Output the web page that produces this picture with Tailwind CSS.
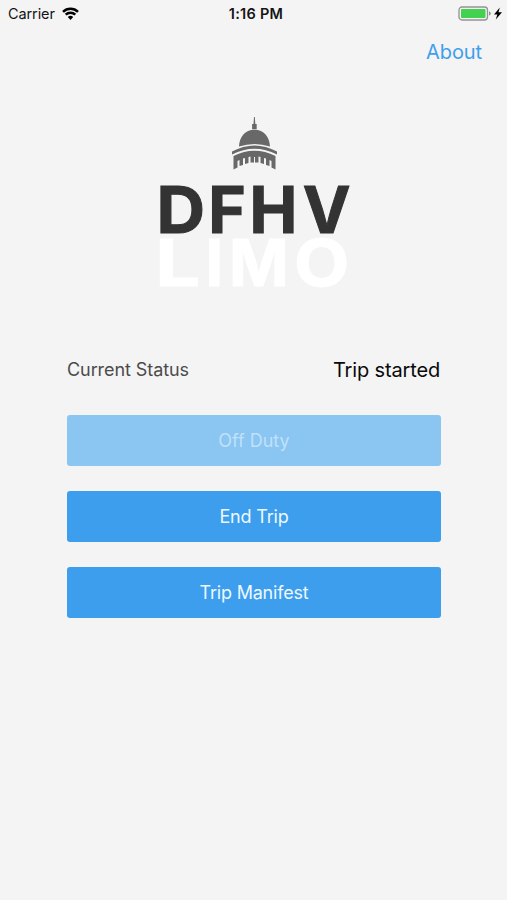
<!DOCTYPE html>
<html lang="en">
<head>
<meta charset="utf-8">
<title>DFHV Limo</title>
<script src="https://cdn.jsdelivr.net/npm/@tailwindcss/browser@4"></script>
</head>
<body class="bg-[#f4f4f4] font-['Inter','Liberation_Sans',sans-serif]">
<div class="flex h-[900px] w-[507px] flex-col overflow-hidden">
  <header class="grid h-7 grid-cols-3 items-center pl-2 pr-[5px] text-[14.5px] leading-7 text-[#151515]">
    <div class="flex items-center gap-[7px]">
      <span class="tracking-[-0.1px]">Carrier</span>
      <svg class="-mt-[2px] h-[13px] w-[17px]" viewBox="0 0 17 13" fill="none" stroke="#000" stroke-width="2.5">
        <path d="M1 4.900a10.600 10.600 0 0 1 15 0"/>
        <path d="M3.700 7.700a6.800 6.800 0 0 1 9.600 0"/>
        <path d="M8.500 13 5.800 10.100a3.900 3.900 0 0 1 5.400 0z" fill="#000" stroke="none"/>
      </svg>
    </div>
    <div class="pl-[2px] text-center font-semibold tracking-[0.25px]">1:16 PM</div>
    <div class="flex items-center justify-end gap-[3px]">
      <svg class="-mt-[2px] h-[15px] w-[33px]" viewBox="0 0 33 15">
        <rect x="1" y="1" width="28.5" height="13" rx="3" fill="#f4f4f4" stroke="#929292" stroke-width="1.3"/>
        <rect x="3" y="3" width="24.5" height="9" rx="1" fill="#42d250"/>
        <path d="M31 5.200q1.800.7 1.800 2.300T31 9.800z" fill="#929292"/>
      </svg>
      <svg class="-mt-[2px] h-[13px] w-[8px]" viewBox="0 0 8 13"><path d="M5.800.5 0 7.500h3.300L1.800 12.500 8 5.300H4.500z" fill="#000"/></svg>
    </div>
  </header>
  <nav class="flex h-12 items-center justify-end pr-[25px]">
    <a class="text-[20px] tracking-[-0.1px] text-[#3e9fec]">About</a>
  </nav>
  <div class="mt-10 flex justify-center">
    <svg class="h-[180px] w-[200px] overflow-visible" viewBox="154 116 200 180" role="img" aria-label="DFHV Limo">
      <g fill="#686868">
        <path d="M254 117h.8l.5 7h1.400v5.200h-4.600V124h1.400z"/>
        <path d="M239 146.500C239.500 137 245 129.800 254.500 129.800S269.500 137 270 146.500Q254.500 141.500 239 146.500z"/>
        <path d="M232 154.500V151.500Q254.500 139.500 277 151.500V154.500Q254.500 143 232 154.500z"/>
        <path d="M233.500 156Q254.500 145.500 275.500 156V169.500L271.500 167.500V161L269.500 160V166L266 165V158.500L264 158V164L260.500 163V157L258.500 156.500V162.500H250.500V156.500L248.500 157V163L245 164V158L243 158.500V165L239.500 166V160L237.500 161V167.500L233.500 169.500z"/>
        <path d="M254 157h1v6h-1z" fill="#f4f4f4"/>
      </g>
      <g font-family="Inter" font-weight="700" font-size="64" fill="#333" stroke="#333" stroke-width="1">
        <text transform="translate(156.500 233) scale(1.050 1)">D</text>
        <text y="233" x="208.200 249.500 302.700">FHV</text>
      </g>
      <g font-family="Inter" font-weight="700" font-size="64" fill="#fff" stroke="#fff" stroke-width="1">
        <text transform="translate(155.300 286) scale(1.240 1)">L</text>
        <text y="286" x="205.300 229">IM</text>
        <text transform="translate(294 286) scale(1.120 1)">O</text>
      </g>
    </svg>
  </div>
  <main class="mx-[67px] mt-[54px] flex flex-col">
    <div class="flex h-10 items-center justify-between">
      <span class="-mt-[2px] text-[18px] tracking-[-0.08px] text-[#4b4b4b]">Current Status</span>
      <span class="text-[20px] tracking-[-0.15px] text-[#090909]">Trip started</span>
    </div>
    <div class="mt-[25px] flex flex-col gap-[25px] text-[18px] tracking-[-0.2px] text-[#eef8ff]">
      <button class="h-[51px] w-[374px] rounded-[3px] bg-[#8bc5f1] tracking-normal text-[#bfe1fb]">Off Duty</button>
      <button class="h-[51px] w-[374px] rounded-[3px] bg-[#3c9eed]">End Trip</button>
      <button class="h-[51px] w-[374px] rounded-[3px] bg-[#3c9eed]">Trip Manifest</button>
    </div>
  </main>
</div>
</body>
</html>
